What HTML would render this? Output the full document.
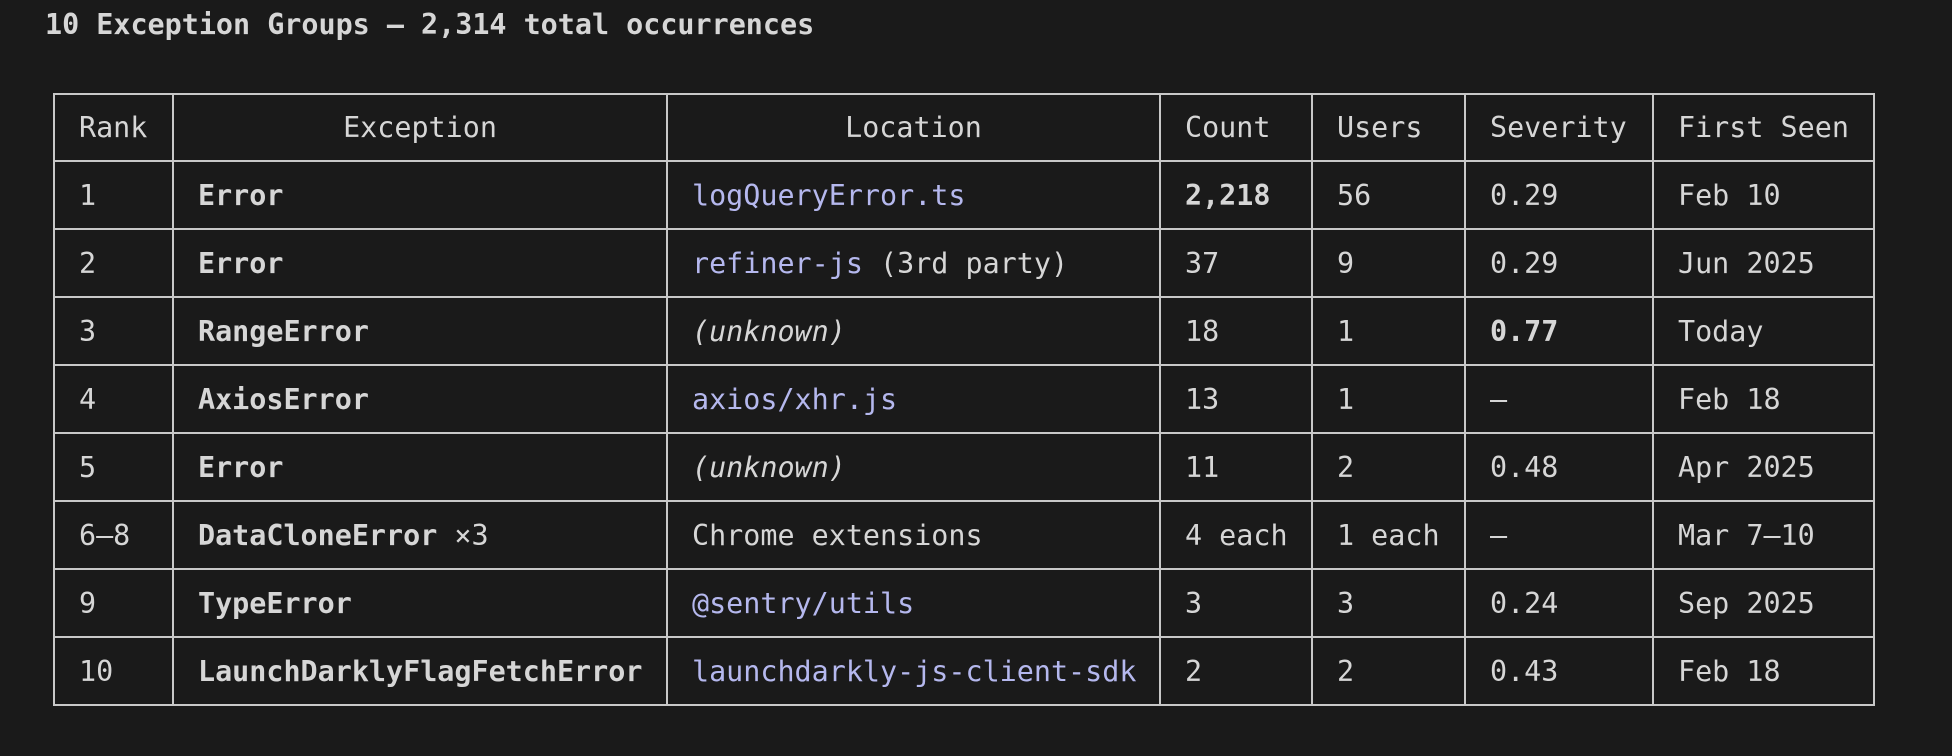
<!DOCTYPE html>
<html><head><style>
html,body{margin:0;padding:0;background:#1a1a1a;width:1952px;height:756px;overflow:hidden}
body{font-family:"DejaVu Sans Mono","Liberation Mono",monospace;color:#d6d6d6;font-size:28.4px}
h1{position:absolute;left:45px;top:5px;margin:0;font-size:28.4px;font-weight:bold;line-height:40px}
table{position:absolute;left:53px;top:93px;border-collapse:collapse;table-layout:fixed;width:1820px}
td,th{border:2px solid #c8c8c8;height:66px;padding:0 0 0 24px;text-align:left;font-weight:normal;white-space:nowrap;overflow:hidden}
th{height:65px}
th.c{text-align:center;padding:0}
b{font-weight:bold}
.l{color:#b5b8ee}
i{font-style:italic}
</style></head><body>
<h1>10 Exception Groups — 2,314 total occurrences</h1>
<table>
<colgroup><col style="width:119px"><col style="width:494px"><col style="width:493px"><col style="width:152px"><col style="width:153px"><col style="width:188px"><col style="width:221px"></colgroup>
<tr><th>Rank</th><th class="c">Exception</th><th class="c">Location</th><th>Count</th><th>Users</th><th>Severity</th><th>First Seen</th></tr>
<tr><td>1</td><td><b>Error</b></td><td class="l">logQueryError.ts</td><td><b>2,218</b></td><td>56</td><td>0.29</td><td>Feb 10</td></tr>
<tr><td>2</td><td><b>Error</b></td><td><span class="l">refiner-js</span> (3rd party)</td><td>37</td><td>9</td><td>0.29</td><td>Jun 2025</td></tr>
<tr><td>3</td><td><b>RangeError</b></td><td><i>(unknown)</i></td><td>18</td><td>1</td><td><b>0.77</b></td><td>Today</td></tr>
<tr><td>4</td><td><b>AxiosError</b></td><td class="l">axios/xhr.js</td><td>13</td><td>1</td><td>—</td><td>Feb 18</td></tr>
<tr><td>5</td><td><b>Error</b></td><td><i>(unknown)</i></td><td>11</td><td>2</td><td>0.48</td><td>Apr 2025</td></tr>
<tr><td>6–8</td><td><b>DataCloneError</b> ×3</td><td>Chrome extensions</td><td>4 each</td><td>1 each</td><td>—</td><td>Mar 7–10</td></tr>
<tr><td>9</td><td><b>TypeError</b></td><td class="l">@sentry/utils</td><td>3</td><td>3</td><td>0.24</td><td>Sep 2025</td></tr>
<tr><td>10</td><td><b>LaunchDarklyFlagFetchError</b></td><td class="l">launchdarkly-js-client-sdk</td><td>2</td><td>2</td><td>0.43</td><td>Feb 18</td></tr>
</table>
</body></html>
